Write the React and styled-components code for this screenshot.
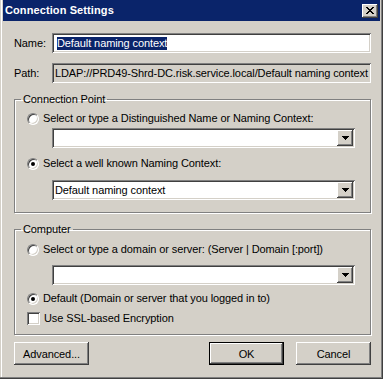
import React from "react";
//Style
import styled, { createGlobalStyle, css } from "styled-components";

const GlobalStyle = createGlobalStyle`
  html, body {
    margin: 0;
    padding: 0;
    background: #d4d0c8;
  }
  body {
    font-family: "Liberation Sans", Arial, sans-serif;
    font-size: 11px;
    letter-spacing: -0.1px;
    color: #000;
  }
  * {
    box-sizing: border-box;
  }
`;

//Classic 3D edges
const raised = css`
  box-shadow: inset -1px -1px 0 #404040, inset 1px 1px 0 #ffffff,
    inset -2px -2px 0 #808080, inset 2px 2px 0 #d4d0c8;
`;

const sunken = css`
  box-shadow: inset 1px 1px 0 #808080, inset -1px -1px 0 #ffffff,
    inset 2px 2px 0 #404040, inset -2px -2px 0 #d4d0c8;
`;

//Close glyph pixels (marlett style)
const closeRows = ["11000011", "01100110", "00111100", "00011000", "00111100", "01100110", "11000011"];

const CloseGlyph = () => (
  <svg width="8" height="7" viewBox="0 0 8 7" shapeRendering="crispEdges">
    {closeRows.map((row, y) =>
      row.split("").map((c, x) => (c === "1" ? <rect key={`${x}-${y}`} x={x} y={y} width="1" height="1" fill="#000" /> : null))
    )}
  </svg>
);

const Arrow = () => (
  <svg width="7" height="4" viewBox="0 0 7 4" shapeRendering="crispEdges">
    <rect x="0" y="0" width="7" height="1" fill="#000" />
    <rect x="1" y="1" width="5" height="1" fill="#000" />
    <rect x="2" y="2" width="3" height="1" fill="#000" />
    <rect x="3" y="3" width="1" height="1" fill="#000" />
  </svg>
);

const Combo = ({ value, $mt }) => (
  <ComboBox $mt={$mt}>
    <ComboText>{value}</ComboText>
    <DropButton>
      <Arrow />
    </DropButton>
  </ComboBox>
);

const Option = ({ type = "radio", checked, children, $mt }) => (
  <OptionRow $mt={$mt}>
    {type === "radio" ? <Radio $checked={checked} /> : <Check />}
    <OptionLabel>{children}</OptionLabel>
  </OptionRow>
);

const App = () => {
  return (
    <>
      <GlobalStyle />
      <Window>
        <TitleBar>
          <Title>Connection Settings</Title>
          <CloseButton>
            <CloseGlyph />
          </CloseButton>
        </TitleBar>
        <Body>
          <FieldRow>
            <FieldLabel>Name:</FieldLabel>
            <TextBox>
              <Selected>Default naming context</Selected>
            </TextBox>
          </FieldRow>
          <FieldRow $mt={10}>
            <FieldLabel>Path:</FieldLabel>
            <TextBox $readOnly>LDAP://PRD49-Shrd-DC.risk.service.local/Default naming context</TextBox>
          </FieldRow>

          <Group $mt={10}>
            <Legend>Connection Point</Legend>
            <GroupBody $pt={6} $pb={12}>
              <Option>Select or type a Distinguished Name or Naming Context:</Option>
              <Combo value="" $mt={3} />
              <Option checked $mt={9}>
                Select a well known Naming Context:
              </Option>
              <Combo value="Default naming context" $mt={10} />
            </GroupBody>
          </Group>

          <Group $mt={10}>
            <Legend>Computer</Legend>
            <GroupBody $pt={7} $pb={9}>
              <Option>Select or type a domain or server: (Server | Domain [:port])</Option>
              <Combo value="" $mt={9} />
              <Option checked $mt={7}>
                Default (Domain or server that you logged in to)
              </Option>
              <Option type="checkbox" $mt={7}>
                Use SSL-based Encryption
              </Option>
            </GroupBody>
          </Group>

          <ButtonRow>
            <Button>Advanced...</Button>
            <Button $default $push>
              OK
            </Button>
            <Button>Cancel</Button>
          </ButtonRow>
        </Body>
      </Window>
    </>
  );
};

const Window = styled.div`
  width: 383px;
  height: 379px;
  padding: 0 3px 3px 3px;
  background: #d4d0c8;
  display: flex;
  flex-direction: column;
  box-shadow: inset -1px -1px 0 #404040, inset -2px -2px 0 #808080,
    inset 1px 0 0 #d4d0c8, inset 2px 0 0 #ffffff;
`;

const TitleBar = styled.div`
  height: 21px;
  background: #0a246a;
  display: flex;
  align-items: center;
  padding: 0 2px 0 2px;
`;

const Title = styled.div`
  flex: 1;
  color: #fff;
  font-weight: bold;
  font-size: 11px;
  letter-spacing: 0.1px;
  line-height: 13px;
`;

const CloseButton = styled.div`
  width: 16px;
  height: 14px;
  background: #d4d0c8;
  display: flex;
  align-items: center;
  justify-content: center;
  padding-right: 1px;
  ${raised}
`;

const Body = styled.div`
  padding: 12px 9px 0 11px;
  display: flex;
  flex-direction: column;
`;

const FieldRow = styled.div`
  display: flex;
  align-items: center;
  margin-top: ${(p) => p.$mt || 0}px;
`;

const FieldLabel = styled.div`
  width: 38px;
  line-height: 13px;
`;

const TextBox = styled.div`
  flex: 1;
  height: 20px;
  padding: 0 2px 0 ${(p) => (p.$readOnly ? 3 : 5)}px;
  display: flex;
  align-items: center;
  white-space: nowrap;
  overflow: hidden;
  background: ${(p) => (p.$readOnly ? "#d4d0c8" : "#fff")};
  ${sunken}
`;

const Selected = styled.span`
  background: #0a246a;
  color: #fff;
  line-height: 13px;
`;

const Group = styled.fieldset`
  margin: ${(p) => p.$mt || 0}px 0 0 0;
  padding: 0;
  border: 1px solid #808080;
  box-shadow: 1px 1px 0 #fff, inset 1px 1px 0 #fff;
  min-width: 0;
`;

const Legend = styled.legend`
  margin-left: 6px;
  padding: 0 2px;
  line-height: 13px;
`;

const GroupBody = styled.div`
  display: flex;
  flex-direction: column;
  padding: ${(p) => p.$pt}px 15px ${(p) => p.$pb}px 12px;
`;

const OptionRow = styled.div`
  display: flex;
  align-items: center;
  height: 13px;
  margin-top: ${(p) => p.$mt || 0}px;
`;

const OptionLabel = styled.span`
  margin-left: 4px;
  line-height: 13px;
  white-space: nowrap;
`;

const Radio = styled.span`
  position: relative;
  width: 12px;
  height: 12px;
  border-radius: 50%;
  background: #fff;
  border: 1px solid;
  border-color: #808080 #ffffff #ffffff #808080;
  box-shadow: inset 1px 1px 0 #404040, inset -1px -1px 0 #d4d0c8;
  &::after {
    content: "";
    display: ${(p) => (p.$checked ? "block" : "none")};
    position: absolute;
    left: 3px;
    top: 3px;
    width: 4px;
    height: 4px;
    border-radius: 50%;
    background: #000;
  }
`;

const Check = styled.span`
  width: 13px;
  height: 13px;
  background: #fff;
  ${sunken}
`;

const ComboBox = styled.div`
  margin: ${(p) => p.$mt || 0}px 0 0 25px;
  height: 20px;
  padding: 2px;
  display: flex;
  background: #fff;
  ${sunken}
`;

const ComboText = styled.div`
  flex: 1;
  padding-left: 1px;
  line-height: 16px;
  white-space: nowrap;
  overflow: hidden;
`;

const DropButton = styled.div`
  width: 16px;
  height: 16px;
  background: #d4d0c8;
  display: flex;
  align-items: center;
  justify-content: center;
  ${raised}
`;

const ButtonRow = styled.div`
  display: flex;
  gap: 12px;
  margin-top: 7px;
`;

const Button = styled.div`
  width: 75px;
  height: 23px;
  display: flex;
  align-items: center;
  justify-content: center;
  background: #d4d0c8;
  margin-left: ${(p) => (p.$push ? "auto" : "0")};
  border: ${(p) => (p.$default ? "1px solid #000" : "none")};
  ${raised}
`;

export default App;
